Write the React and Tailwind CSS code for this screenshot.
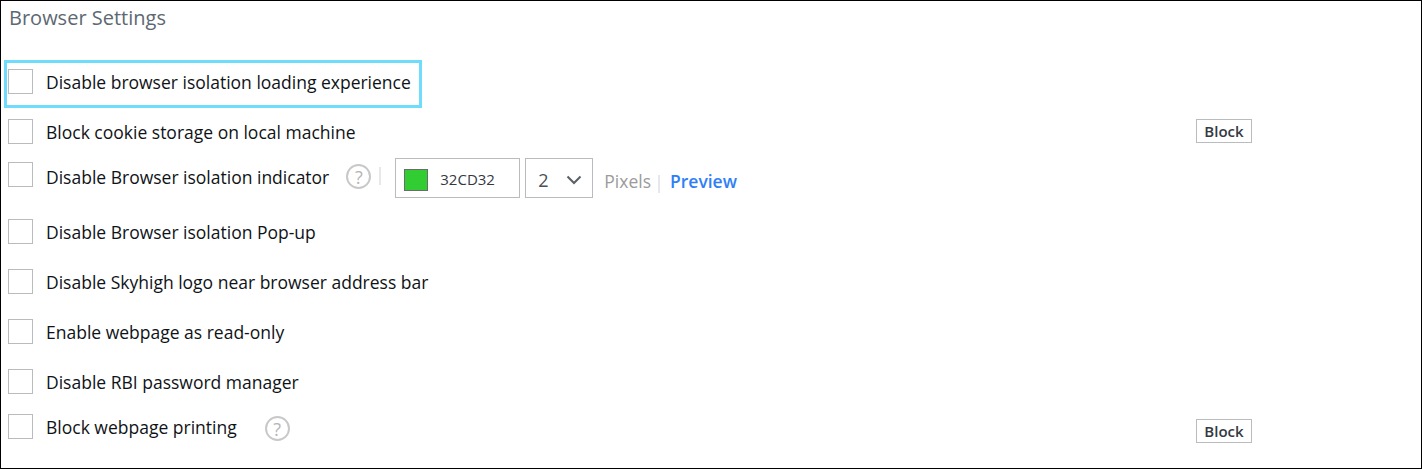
import React from 'react';

const font = { fontFamily: '"Open Sans", sans-serif' };

const Checkbox = () => (
  <span className="w-[25px] h-[25px] shrink-0 border border-[#b9bcbf] bg-white" />
);

const HelpIcon = ({ className }) => (
  <span className={`w-[25px] h-[25px] shrink-0 rounded-full border-2 border-[#c8c8c8] flex items-center justify-center text-[18px] leading-none text-[#b5b5b5] ${className}`}>
    ?
  </span>
);

const BlockButton = ({ className }) => (
  <button className={`w-[56px] h-[24px] ml-auto mr-[169px] border border-[#b9bcbf] bg-white text-[15px] font-semibold leading-none text-[#33393f] ${className}`}>
    Block
  </button>
);

const Label = ({ children, className = '' }) => (
  <span className={`ml-[13px] text-[17.5px] leading-[27px] text-[#0f1317] whitespace-nowrap ${className}`}>{children}</span>
);

const App = () => {
  return (
    <div className="w-[1422px] h-[469px] border border-black bg-white overflow-hidden" style={font}>
      <h2 className="pl-[8px] pt-[4px] h-[59px] text-[20px] leading-[26px] font-normal text-[#5d6872]">Browser Settings</h2>

      <div className="flex flex-col">
        {/* highlighted row */}
        <div className="flex items-start w-[418px] h-[48px] ml-[3px] pl-[1px] pt-[6px] border-[3px] border-[#6fdcfb]">
          <Checkbox />
          <Label>Disable browser isolation loading experience</Label>
        </div>

        <div className="flex items-start h-[45px] pl-[7px] pt-[11px]">
          <Checkbox />
          <Label>Block cookie storage on local machine</Label>
          <BlockButton />
        </div>

        <div className="flex items-start h-[57px] pl-[7px] pt-[9px]">
          <Checkbox />
          <Label className="mt-[2px]">Disable Browser isolation indicator</Label>
          <HelpIcon className="ml-[17px] mt-[2px]" />
          <span className="w-[2px] h-[18px] ml-[8px] mt-[5px] bg-[#e6e8ec]" />
          <div className="flex items-center w-[125px] h-[40px] ml-[14px] -mt-[4px] pl-[8px] pt-[3px] border border-[#b9bcbf]">
            <span className="w-[24px] h-[22px] bg-[#32cd32] border border-[#6b6b6b]" />
            <span className="ml-[12px] text-[15px] text-[#33393f]">32CD32</span>
          </div>
          <div className="flex items-center justify-between w-[68px] h-[40px] ml-[5px] -mt-[4px] pl-[12px] pr-[10px] pt-[4px] border border-[#b9bcbf] text-[#4a4f55]">
            <span className="text-[18px]">2</span>
            <svg width="16" height="10" viewBox="0 0 16 10" fill="none" stroke="#5b6066" strokeWidth="2">
              <path d="M1.5 1.5 8 8l6.5-6.5" />
            </svg>
          </div>
          <span className="ml-[11px] mt-[6px] text-[17.5px] leading-[27px] text-[#9b9b9b]">Pixels</span>
          <span className="w-[2px] h-[18px] ml-[7px] mt-[13px] bg-[#e6e8ec]" />
          <span className="ml-[10px] mt-[6px] text-[17.5px] leading-[27px] font-semibold text-[#2f80f7]">Preview</span>
        </div>

        <div className="flex items-start h-[50px] pl-[7px] pt-[9px]">
          <Checkbox />
          <Label>Disable Browser isolation Pop-up</Label>
        </div>

        <div className="flex items-start h-[50px] pl-[7px] pt-[9px]">
          <Checkbox />
          <Label>Disable Skyhigh logo near browser address bar</Label>
        </div>

        <div className="flex items-start h-[50px] pl-[7px] pt-[9px]">
          <Checkbox />
          <Label>Enable webpage as read-only</Label>
        </div>

        <div className="flex items-start h-[45px] pl-[7px] pt-[9px]">
          <Checkbox />
          <Label>Disable RBI password manager</Label>
        </div>

        <div className="flex items-start h-[63px] pl-[7px] pt-[9px]">
          <Checkbox />
          <Label>Block webpage printing</Label>
          <HelpIcon className="ml-[28px] mt-[2px]" />
          <BlockButton className="mt-[5px]" />
        </div>
      </div>
    </div>
  );
};

export default App;
